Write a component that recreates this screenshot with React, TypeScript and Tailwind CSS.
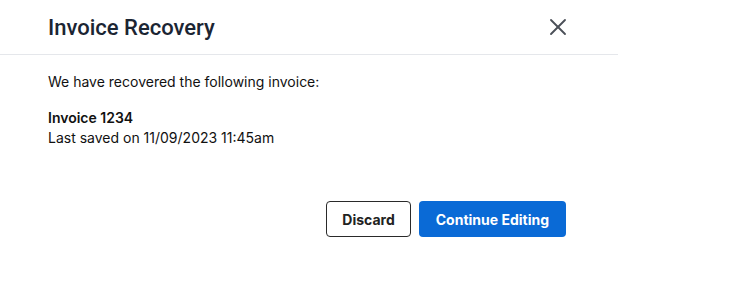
import { X } from "lucide-react";

export default function App() {
  return (
    <div className="h-[282px] w-[752px] bg-white font-['Inter',sans-serif]">
      <div className="w-[618px] bg-white">
        <div className="flex h-[55px] items-center justify-between border-b border-[#e5e7eb] pl-12 pr-[46px]">
          <h2 className="font-['Roboto',sans-serif] text-[22px] font-medium text-[#1b2533]">Invoice Recovery</h2>
          <button type="button" aria-label="Close" className="text-[#4b5058]">
            <X size={28} strokeWidth={1.6} />
          </button>
        </div>
        <div className="pl-12 pr-[52px] pt-[17px] text-[14px] text-[#111]">
          <p className="leading-5">We have recovered the following invoice:</p>
          <p className="mt-4 font-semibold leading-5">Invoice 1234</p>
          <p className="leading-5">Last saved on 11/09/2023 11:45am</p>
          <div className="mt-[53px] flex justify-end gap-2">
            <button
              type="button"
              className="h-9 rounded border border-[#2a2a2a] px-[15px] text-[14px] font-bold text-[#222]"
            >
              Discard
            </button>
            <button
              type="button"
              className="h-9 rounded bg-[#0a6ad6] px-[17px] text-[14px] font-bold text-white"
            >
              Continue Editing
            </button>
          </div>
        </div>
      </div>
    </div>
  );
}
